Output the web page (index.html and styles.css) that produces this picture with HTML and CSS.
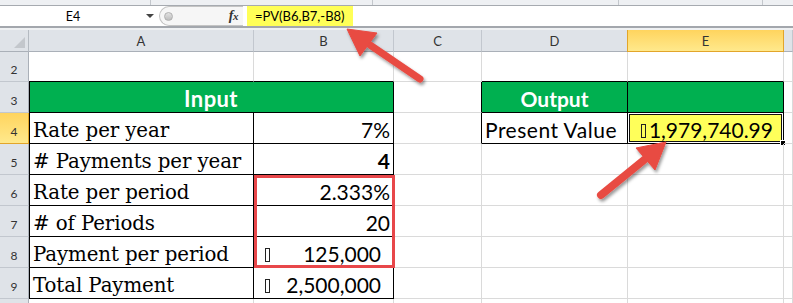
FILE: index.html
```html
<!DOCTYPE html>
<html>
<head>
<meta charset="utf-8">
<title>PV</title>
<link rel="stylesheet" href="styles.css">
</head>
<body>
<div class="ribbon"><span class="w1"></span><span class="w2"></span><span class="w3"></span><span class="w4"></span></div>
<div class="fbar">
  <div class="namebox"><span class="nb-text">E4</span><span class="nb-arrow"></span></div>
  <div class="grip"><span class="knob"></span><span class="fx"><i>f</i><i class="x">x</i></span></div>
  <div class="formula"><span class="fx-hl">=PV(B6,B7,-B8)</span></div>
</div>
<div class="sep"></div>
<div class="grid">
  <div class="corner"><span class="tri"></span></div>
  <div class="ch">A</div><div class="ch">B</div><div class="ch">C</div><div class="ch">D</div><div class="ch hl">E</div><div class="ch"></div>

  <div class="rh">2</div>
  <div class="c bk-b"></div><div class="c bk-b"></div><div class="c"></div><div class="c bk-b"></div><div class="c bk-b"></div><div class="c"></div>

  <div class="rh">3</div>
  <div class="c span2 green big bk-l bk-r bk-b">Input</div><div class="c bk-r"></div><div class="c green bk-r bk-b">Output</div><div class="c green bk-r bk-b"></div><div class="c"></div>

  <div class="rh hl">4</div>
  <div class="c lbl bk-l bk-r bk-b">Rate per year</div><div class="c num bk-r bk-b">7%</div><div class="c bk-r"></div><div class="c sans bk-r bk-b">Present Value</div><div class="c num sel bk-r bk-b"><span class="tofu"></span>1,979,740.99<span class="handle"></span></div><div class="c"></div>

  <div class="rh">5</div>
  <div class="c lbl bk-l bk-r bk-b"># Payments per year</div><div class="c num bold bk-r bk-b">4</div><div class="c"></div><div class="c"></div><div class="c"></div><div class="c"></div>

  <div class="rh">6</div>
  <div class="c lbl bk-l bk-r bk-b">Rate per period</div><div class="c num bk-r bk-b">2.333%</div><div class="c"></div><div class="c"></div><div class="c"></div><div class="c"></div>

  <div class="rh">7</div>
  <div class="c lbl bk-l bk-r bk-b"># of Periods</div><div class="c num bk-r bk-b">20</div><div class="c"></div><div class="c"></div><div class="c"></div><div class="c"></div>

  <div class="rh">8</div>
  <div class="c lbl bk-l bk-r bk-b">Payment per period</div><div class="c num acct bk-r bk-b"><span class="tofu"></span><span>125,000</span></div><div class="c"></div><div class="c"></div><div class="c"></div><div class="c"></div>

  <div class="rh">9</div>
  <div class="c lbl bk-l bk-r bk-b">Total Payment</div><div class="c num acct bk-r bk-b"><span class="tofu"></span><span>2,500,000</span></div><div class="c"></div><div class="c"></div><div class="c"></div><div class="c"></div>

  <div class="rh last"></div>
  <div class="c last"></div><div class="c last"></div><div class="c last"></div><div class="c last"></div><div class="c last"></div><div class="c last"></div>

  <div class="redbox"></div>
</div>

<svg class="arrows" width="793" height="303" viewBox="0 0 793 303">
  <defs>
    <filter id="sh" x="-20%" y="-20%" width="140%" height="140%">
      <feDropShadow dx="1.5" dy="2.5" stdDeviation="1.6" flood-color="#000" flood-opacity="0.4"/>
    </filter>
  </defs>
  <g filter="url(#sh)" fill="#e84b43" stroke="#e84b43">
    <line x1="420" y1="79" x2="370" y2="45" stroke-width="7" stroke-linecap="round"/>
    <polygon points="347,29 377,33 360,56" stroke-width="1" stroke-linejoin="round"/>
    <line x1="601" y1="195" x2="644" y2="160" stroke-width="8" stroke-linecap="round"/>
    <polygon points="666,142 655,170 636,148" stroke-width="1" stroke-linejoin="round"/>
  </g>
</svg>
</body>
</html>
```

FILE: styles.css
```css
* { box-sizing: border-box; margin: 0; padding: 0; }
html, body { width: 793px; height: 303px; overflow: hidden; background: #fff; }
body { font-family: Lato, "Liberation Sans", sans-serif; color: #000; position: relative; }

.ribbon { display: flex; height: 6px; background: #eef0f3; border-bottom: 1px solid #a6aab0; }
.ribbon span { height: 5px; border-right: 1px solid #c3c7cc; }
.w1 { width: 151px; }
.w2 { width: 222px; }
.w3 { width: 246px; }
.w4 { width: 144px; }

.fbar { display: flex; height: 20px; background: #fff; }
.namebox { width: 159px; display: flex; align-items: center; }
.nb-text { flex: 1; text-align: center; font-size: 12.5px; }
.nb-arrow { width: 0; height: 0; border-left: 4px solid transparent; border-right: 4px solid transparent; border-top: 4px solid #444; margin-right: 5px; }
.grip { width: 84px; display: flex; align-items: center; justify-content: space-between; background: #f6f6f6; border: 1px solid #c4c4c4; border-right: none; border-radius: 10px 0 0 10px; padding: 0 5px 0 4px; }
.knob { width: 9px; height: 9px; border-radius: 50%; background: linear-gradient(#e2e2e2, #bdbdbd); border: 1px solid #b0b0b0; }
.fx { font-family: "Liberation Serif", serif; font-style: italic; font-weight: 700; font-size: 14px; color: #333; letter-spacing: -0.5px; }
.fx i { font-style: italic; }
.fx .x { font-size: 11px; }
.formula { flex: 1; display: flex; padding-left: 4px; }
.fx-hl { background: #ffff57; font-size: 13px; line-height: 20px; padding: 0 8px 0 8px; }

.sep { height: 4px; border-top: 2px solid #a3a7ad; background: #eff1f3; }

.grid { position: relative; display: grid; grid-template-columns: 29px 225px 140px 88px 146px 156px 9px; grid-template-rows: 22px 30px repeat(7, 31px) 4px; }

.corner { background: #dfe3e8; border-right: 1px solid #b4bac1; border-bottom: 1px solid #aab0b8; position: relative; }
.tri { position: absolute; right: 3px; bottom: 3px; width: 0; height: 0; border-left: 11px solid transparent; border-bottom: 11px solid #c3c7cc; }

.ch { background: #dfe3e8; border-right: 1px solid #c2c7ce; border-bottom: 1px solid #aab0b8; display: flex; align-items: center; justify-content: center; font-size: 13px; color: #333; }
.rh { background: #dfe3e8; border-right: 1px solid #aab0b8; border-bottom: 1px solid #c2c7ce; display: flex; align-items: flex-end; justify-content: center; font-size: 12px; line-height: 12px; color: #333; padding-bottom: 5px; }
.hl { background: linear-gradient(#ffd45e, #ffe98c); border-color: #e2a52a; }
.ch.hl { border-left: 1px solid #e2a52a; margin-left: -1px; }

.c { border-right: 1px solid #dadada; border-bottom: 1px solid #dadada; display: flex; align-items: flex-end; position: relative; white-space: nowrap; }
.last { border-bottom: none; padding: 0; }
.span2 { grid-column: span 2; }
.bk-r { border-right-color: #000; }
.bk-b { border-bottom-color: #000; }
.bk-l { box-shadow: inset 1px 0 0 #000; }

.green { background: #00b050; color: #fff; font-weight: 700; justify-content: center; font-size: 21px; line-height: 21px; padding-bottom: 3px; }
.green.big { font-size: 22px; letter-spacing: 0.4px; }
.lbl { font-family: "DejaVu Serif", serif; font-size: 19.8px; line-height: 20px; padding: 0 0 2px 4px; letter-spacing: -0.1px; }
.num { font-size: 21px; line-height: 21px; justify-content: flex-end; padding: 0 3px 3px 0; }
.sans { font-size: 21px; line-height: 21px; padding: 0 0 3px 3px; letter-spacing: 0.5px; }
.bold { font-weight: 700; }
.acct { justify-content: space-between; padding: 0 12px 3px 11px; }
.tofu { display: inline-block; width: 5px; height: 14px; border: 1px solid #222; margin-bottom: 2px; }
.sel { background: #ffff5a; box-shadow: inset 0 0 0 1px #fff, inset 0 0 0 2px #111; padding-right: 10px; }
.sel .tofu { margin-right: 3px; }
.handle { position: absolute; right: -3px; bottom: -3px; width: 6px; height: 6px; background: #000; border: 1px solid #fff; }

.redbox { position: absolute; left: 254px; top: 145px; width: 141px; height: 93px; border: 3px solid #e8474a; pointer-events: none; }

.arrows { position: absolute; left: 0; top: 0; pointer-events: none; }
```
